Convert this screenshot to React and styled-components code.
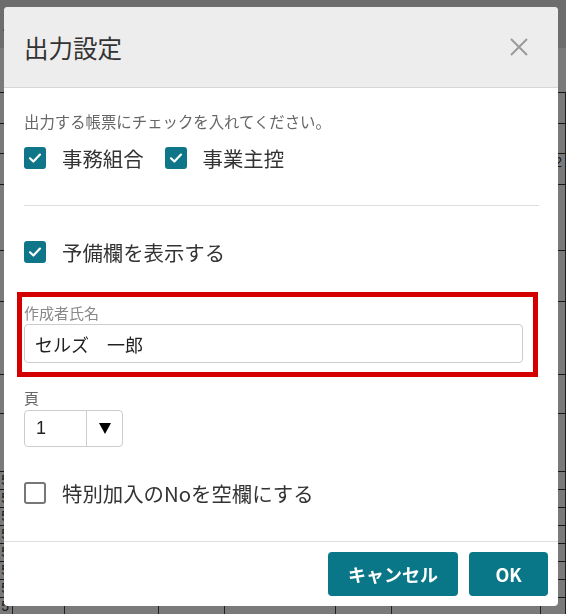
import React from "react";
import styled, { createGlobalStyle } from "styled-components";

const GlobalStyle = createGlobalStyle`
  html, body { margin: 0; padding: 0; width: 566px; height: 614px; overflow: hidden; }
  body { font-family: "Noto Sans CJK JP", "Noto Sans", sans-serif; color: #333; }
`;

const Page = styled.div`
  width: 566px;
  height: 614px;
  background: #fff;
  display: flex;
  flex-direction: column;
  overflow: hidden;
`;

const PageHeader = styled.div`
  height: 48px;
  flex: none;
  background: #e4e4e4;
  display: flex;
  align-items: center;
  font-size: 30px;
  color: #135a66;
  padding-left: 2px;
`;

const Table = styled.div`
  display: flex;
  flex-direction: column;
  margin-top: 44px;
`;

const TRow = styled.div`
  flex: none;
  display: grid;
  grid-template-columns: 13px 52px 94px 66px 111px 56px 149px 25px;
  height: ${(p) => p.h}px;
  border-top: 1px solid #333;
  font-family: "Liberation Sans", Arial, sans-serif;
  font-size: 14px;
`;

const TCell = styled.div`
  border-right: 1px solid #444;
  text-align: right;
  padding-right: 3px;
  overflow: hidden;
  white-space: nowrap;
  line-height: 16px;
`;

const Overlay = styled.div`
  position: fixed;
  inset: 0;
  background: rgba(0, 0, 0, 0.52);
`;

const Modal = styled.div`
  position: absolute;
  left: 4px;
  top: 7px;
  width: 554px;
  height: 599px;
  background: #fff;
  border-radius: 4px;
  overflow: hidden;
  display: flex;
  flex-direction: column;
`;

const Header = styled.div`
  height: 80px;
  flex: none;
  background: #ededed;
  border-bottom: 1px solid #d6d6d6;
  display: flex;
  align-items: center;
  justify-content: space-between;
  padding: 0 30px 0 20px;
`;

const Title = styled.h2`
  margin: 0;
  font-size: 24.5px;
  font-weight: 400;
  color: #333;
`;

const CloseButton = styled.button`
  border: none;
  background: none;
  padding: 0;
  width: 18px;
  height: 18px;
  display: flex;
  cursor: pointer;
`;

const Body = styled.div`
  flex: 1;
  display: flex;
  flex-direction: column;
  padding: 22px 19px 0 20px;
`;

const Instruction = styled.p`
  margin: 0;
  font-size: 15.4px;
  line-height: 22px;
  color: #666;
`;

const CheckRow = styled.div`
  display: flex;
  align-items: center;
  margin-top: ${(p) => p.mt}px;
  height: 26px;
`;

const CheckItem = styled.label`
  display: flex;
  align-items: center;
  gap: 16px;
  margin-right: 21px;
  font-size: 20.4px;
  color: #333;
`;

const Box = styled.span`
  width: 22px;
  height: 22px;
  box-sizing: border-box;
  border-radius: 3px;
  flex: none;
  display: flex;
  align-items: center;
  justify-content: center;
  background: ${(p) => (p.checked ? "#0f7588" : "#fff")};
  border: ${(p) => (p.checked ? "none" : "2.5px solid #777")};
`;

const Divider = styled.hr`
  margin: 34px 0 0;
  border: none;
  border-top: 1px solid #ddd;
`;

const Highlight = styled.div`
  margin: 27px 1px 0 -7px;
  border: 5px solid #d40000;
  padding: 6px 10px 9px 2px;
  display: flex;
  flex-direction: column;
`;

const FieldLabel = styled.div`
  font-size: 15px;
  line-height: 20px;
  color: ${(p) => p.color || "#888"};
  margin-top: ${(p) => p.mt || 0}px;
`;

const TextInput = styled.div`
  margin-top: 1px;
  height: 39px;
  box-sizing: border-box;
  border: 1px solid #ccc;
  border-radius: 4px;
  display: flex;
  align-items: center;
  padding-left: 10px;
  font-size: 18px;
  color: #222;
`;

const Select = styled.div`
  margin-top: 2px;
  width: 99px;
  height: 37px;
  box-sizing: border-box;
  border: 1px solid #ccc;
  border-radius: 4px;
  display: grid;
  grid-template-columns: 62px 1fr;
  align-items: stretch;
`;

const SelectValue = styled.div`
  display: flex;
  align-items: center;
  padding-left: 11px;
  font-size: 18px;
  font-family: "Liberation Sans", Arial, sans-serif;
  color: #222;
  border-right: 1px solid #ccc;
`;

const SelectArrow = styled.div`
  display: flex;
  align-items: center;
  justify-content: center;
  padding-left: 1px;
`;

const Footer = styled.div`
  flex: none;
  border-top: 1px solid #ddd;
  padding: 10px 10px 10px;
  display: flex;
  justify-content: flex-end;
  gap: 11px;
`;

const Button = styled.button`
  height: 44px;
  width: ${(p) => p.w}px;
  border: none;
  border-radius: 4px;
  background: #0a7788;
  color: #fff;
  font-family: "Noto Sans CJK JP", "Noto Sans", sans-serif;
  font-size: 18px;
  font-weight: 700;
  cursor: pointer;
`;

const Check = () => (
  <svg width="16" height="16" viewBox="0 0 16 16">
    <path d="M3 8.3 L6.4 11.5 L13 4.6" fill="none" stroke="#fff" strokeWidth="2.2" strokeLinecap="round" strokeLinejoin="round" />
  </svg>
);

const Checkbox = ({ checked, label }) => (
  <CheckItem>
    <Box checked={checked}>{checked && <Check />}</Box>
    {label}
  </CheckItem>
);

const rows = [
  { h: 30, c: [] },
  { h: 29, c: [] },
  { h: 30, c: ["", "", "", "", "", "", "", "2"] },
  { h: 65, c: [] },
  { h: 50, c: [] },
  { h: 72, c: [] },
  { h: 38, c: [] },
  { h: 57, c: [] },
  { h: 17, c: ["5"] },
  { h: 17, c: ["5"] },
  { h: 17, c: ["5"] },
  { h: 17, c: ["5"] },
  { h: 17, c: ["5"] },
  { h: 17, c: ["5"] },
  { h: 17, c: ["5"] },
  { h: 17, c: ["5"] },
  { h: 17, c: ["00", "3", "431,180", "17", "3,220,400", "11", "3,775,000", "1"] },
];

export default function App() {
  return (
    <>
      <GlobalStyle />
      <Page>
        <PageHeader>事</PageHeader>
        <Table>
          {rows.map((r, i) => (
            <TRow key={i} h={r.h}>
              {Array.from({ length: 8 }).map((_, j) => (
                <TCell key={j}>{r.c[j] || ""}</TCell>
              ))}
            </TRow>
          ))}
        </Table>
      </Page>
      <Overlay>
        <Modal>
          <Header>
            <Title>出力設定</Title>
            <CloseButton aria-label="閉じる">
              <svg width="18" height="18" viewBox="0 0 18 18">
                <path d="M1 1 L17 17 M17 1 L1 17" stroke="#9a9a9a" strokeWidth="2" />
              </svg>
            </CloseButton>
          </Header>
          <Body>
            <Instruction>出力する帳票にチェックを入れてください。</Instruction>
            <CheckRow mt={13}>
              <Checkbox checked label="事務組合" />
              <Checkbox checked label="事業主控" />
            </CheckRow>
            <Divider />
            <CheckRow mt={33}>
              <Checkbox checked label="予備欄を表示する" />
            </CheckRow>
            <Highlight>
              <FieldLabel>作成者氏名</FieldLabel>
              <TextInput>セルズ　一郎</TextInput>
            </Highlight>
            <FieldLabel mt={11} color="#666">頁</FieldLabel>
            <Select>
              <SelectValue>1</SelectValue>
              <SelectArrow>
                <svg width="12" height="11" viewBox="0 0 12 11">
                  <polygon points="0,0 12,0 6,11" fill="#000" />
                </svg>
              </SelectArrow>
            </Select>
            <CheckRow mt={33}>
              <Checkbox label="特別加入のNoを空欄にする" />
            </CheckRow>
          </Body>
          <Footer>
            <Button w={130}>キャンセル</Button>
            <Button w={79}>OK</Button>
          </Footer>
        </Modal>
      </Overlay>
    </>
  );
}
